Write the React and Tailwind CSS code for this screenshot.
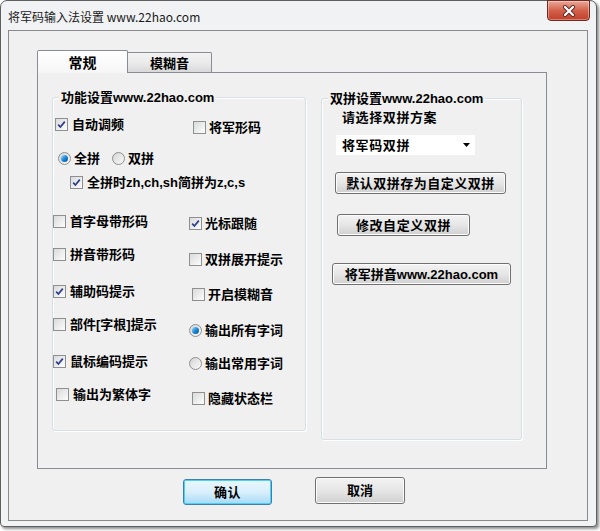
import React from 'react';

const Check = ({ checked }) => (
  <span className="w-[13px] h-[13px] shrink-0 border border-[#8e8f8f] bg-linear-to-br from-[#dadada] to-[#fdfdfd] flex items-center justify-center">
    {checked && (
      <svg width="11" height="11" viewBox="0 0 11 11">
        <path d="M2.2 5.6 L4.4 8 L8.8 2.6" fill="none" stroke="#2c3e8c" strokeWidth="1.7" />
      </svg>
    )}
  </span>
);

const Radio = ({ checked }) => (
  <span className="w-[13px] h-[13px] shrink-0 rounded-full border border-[#8e8f8f] bg-linear-to-br from-[#d4d4d4] to-[#fbfbfb] flex items-center justify-center">
    {checked && (
      <span className="w-[7px] h-[7px] rounded-full bg-linear-to-br from-[#8fe0fb] via-[#1c8ad6] to-[#0b4f96]" />
    )}
  </span>
);

const Item = ({ kind = 'check', checked, gap = 'gap-[4px]', children }) => (
  <div className={'flex items-center h-[13px] ' + gap}>
    {kind === 'radio' ? <Radio checked={checked} /> : <Check checked={checked} />}
    <span className="leading-[13px] whitespace-nowrap">{children}</span>
  </div>
);

const Button = ({ className, children }) => (
  <button
    className={
      'flex items-center justify-center rounded-[3px] border border-[#707070] bg-linear-to-b from-[#f3f3f3] via-[#e6e6e6] to-[#d0d0d0] font-bold text-[13px] leading-[13px] text-black shadow-[inset_0_0_0_1px_#fcfcfc] ' +
      className
    }
  >
    {children}
  </button>
);

const GroupBox = ({ title, className, children }) => (
  <div className={'relative rounded-[3px] border border-[#d5dfe5] shadow-[inset_1px_1px_0_#fff,1px_1px_0_#fff] ' + className}>
    <div className="absolute top-[-8px] left-[6px] px-[2px] bg-[#f0f0f0] font-bold text-[13px] leading-[15px] whitespace-nowrap">
      {title}
    </div>
    {children}
  </div>
);

export default function App() {
  return (
    <div className="w-[600px] h-[531px] bg-white font-['Liberation_Sans','Noto_Sans_CJK_SC',sans-serif] text-black">
      <div className="w-[597px] h-[527px] rounded-t-[7px] rounded-b-[4px] border border-[#5f5f5f] bg-[#f1f2f4] shadow-[2px_2px_3px_rgba(0,0,0,0.45)] flex flex-col">
        {/* title bar */}
        <div className="h-[29px] flex items-start justify-between shrink-0">
          <div className="ml-[7px] mt-[9px] text-[12px] leading-[14px] font-['Noto_Sans_CJK_SC',sans-serif] text-[#1a1a1a]">
            将军码输入法设置 www.22hao.com
          </div>
          <div className="-mt-[1px] mr-[6px] w-[43px] h-[21px] rounded-b-[4px] border border-[#6e2a22] bg-linear-to-b from-[#e9a898] via-[#d2604b] to-[#c23f28] shadow-[inset_0_0_0_1px_rgba(255,255,255,0.35)] flex items-center justify-center">
            <svg width="14" height="12" viewBox="0 0 14 12">
              <path d="M3 2 L11 10 M11 2 L3 10" stroke="#5a2a25" strokeWidth="4" strokeLinecap="round" />
              <path d="M3 2 L11 10 M11 2 L3 10" stroke="#ffffff" strokeWidth="2.2" strokeLinecap="round" />
            </svg>
          </div>
        </div>

        {/* client area */}
        <div className="ml-[7px] w-[580px] h-[491px] border border-[#8a8a8a] bg-[#f0f0f0] flex flex-col">
          <div className="ml-[28px] mt-[19px] w-[510px]">
            {/* tabs */}
            <div className="flex items-end h-[22px]">
              <div className="relative z-10 -mb-[1px] w-[91px] h-[23px] border border-b-0 border-[#898c95] rounded-t-[2px] bg-linear-to-b from-white to-[#f6f6f6] flex items-center justify-center font-bold text-[14px] leading-[14px] pt-[1px]">
                常规
              </div>
              <div className="w-[84px] h-[20px] border border-l-0 border-b-0 border-[#898c95] rounded-tr-[2px] bg-linear-to-b from-[#f2f2f2] via-[#ebebeb] to-[#d9d9d9] flex items-center justify-center font-bold text-[13px] leading-[13px] pt-[2px]">
                模糊音
              </div>
            </div>

            {/* tab page */}
            <div className="h-[397px] border border-[#898c95] bg-[#f0f0f0] flex items-start">
              <GroupBox title="功能设置www.22hao.com" className="ml-[14px] mt-[24px] w-[254px] h-[334px]">
                <div className="flex flex-col pt-[20px] font-bold text-[13px]">
                  <div className="flex h-[34px]">
                    <div className="w-[136px] pl-[2px]"><Item checked>自动调频</Item></div>
                    <div className="pl-[4px] pt-[3px]"><Item gap="gap-[3px]">将军形码</Item></div>
                  </div>
                  <div className="flex h-[24px] pl-[5px]">
                    <Item kind="radio" checked gap="gap-[3px]">全拼</Item>
                    <div className="ml-[12px]"><Item kind="radio" gap="gap-[3px]">双拼</Item></div>
                  </div>
                  <div className="flex h-[39px] pl-[17px]">
                    <Item checked>全拼时zh,ch,sh简拼为z,c,s</Item>
                  </div>
                  <div className="flex h-[33px]">
                    <div className="w-[136px]"><Item>首字母带形码</Item></div>
                    <div className="pt-[2px]"><Item checked gap="gap-[3px]">光标跟随</Item></div>
                  </div>
                  <div className="flex h-[37px]">
                    <div className="w-[136px]"><Item>拼音带形码</Item></div>
                    <div className="pt-[5px]"><Item gap="gap-[3px]">双拼展开提示</Item></div>
                  </div>
                  <div className="flex h-[33px]">
                    <div className="w-[136px]"><Item checked>辅助码提示</Item></div>
                    <div className="pl-[3px] pt-[3px]"><Item gap="gap-[3px]">开启模糊音</Item></div>
                  </div>
                  <div className="flex h-[37px]">
                    <div className="w-[136px]"><Item>部件[字根]提示</Item></div>
                    <div className="pt-[6px]"><Item kind="radio" checked gap="gap-[3px]">输出所有字词</Item></div>
                  </div>
                  <div className="flex h-[33px]">
                    <div className="w-[136px]"><Item checked>鼠标编码提示</Item></div>
                    <div className="pt-[2px]"><Item kind="radio" gap="gap-[3px]">输出常用字词</Item></div>
                  </div>
                  <div className="flex">
                    <div className="w-[136px] pl-[3px]"><Item>输出为繁体字</Item></div>
                    <div className="pl-[3px] pt-[4px]"><Item gap="gap-[3px]">隐藏状态栏</Item></div>
                  </div>
                </div>
              </GroupBox>

              <GroupBox title="双拼设置www.22hao.com" className="ml-[15px] mt-[25px] w-[201px] h-[342px]">
                <div className="flex flex-col items-start pt-[12px]">
                  <div className="ml-[20px] font-bold text-[13px] leading-[13px] tracking-[0.6px]">请选择双拼方案</div>
                  <div className="ml-[14px] mt-[11px] w-[139px] h-[20px] bg-white flex items-center justify-between pl-[6px] pr-[5px] font-bold text-[13px] leading-[13px]">
                    <span className="tracking-[0.6px]">将军码双拼</span>
                    <svg width="7" height="4" viewBox="0 0 7 4">
                      <path d="M0 0 H7 L3.5 4 Z" fill="#000" />
                    </svg>
                  </div>
                  <Button className="ml-[13px] mt-[17px] w-[171px] h-[22px] tracking-[0.5px]">默认双拼存为自定义双拼</Button>
                  <Button className="ml-[15px] mt-[20px] w-[133px] h-[22px] tracking-[0.6px]">修改自定义双拼</Button>
                  <Button className="ml-[10px] mt-[27px] w-[179px] h-[22px]">将军拼音www.22hao.com</Button>
                </div>
              </GroupBox>
            </div>
          </div>

          {/* dialog buttons */}
          <div className="flex items-start ml-[174px] mt-[8px]">
            <button className="mt-[2px] w-[89px] h-[26px] rounded-[3px] border border-[#3c7fb1] bg-linear-to-b from-[#eaf6fd] via-[#d9f0fc] to-[#a7d9f5] shadow-[inset_0_0_0_1px_#48d3f6] flex items-center justify-center font-bold text-[13px] leading-[13px] tracking-[0.5px]">
              确认
            </button>
            <Button className="ml-[43px] w-[90px] h-[27px]">取消</Button>
          </div>
        </div>
      </div>
    </div>
  );
}
